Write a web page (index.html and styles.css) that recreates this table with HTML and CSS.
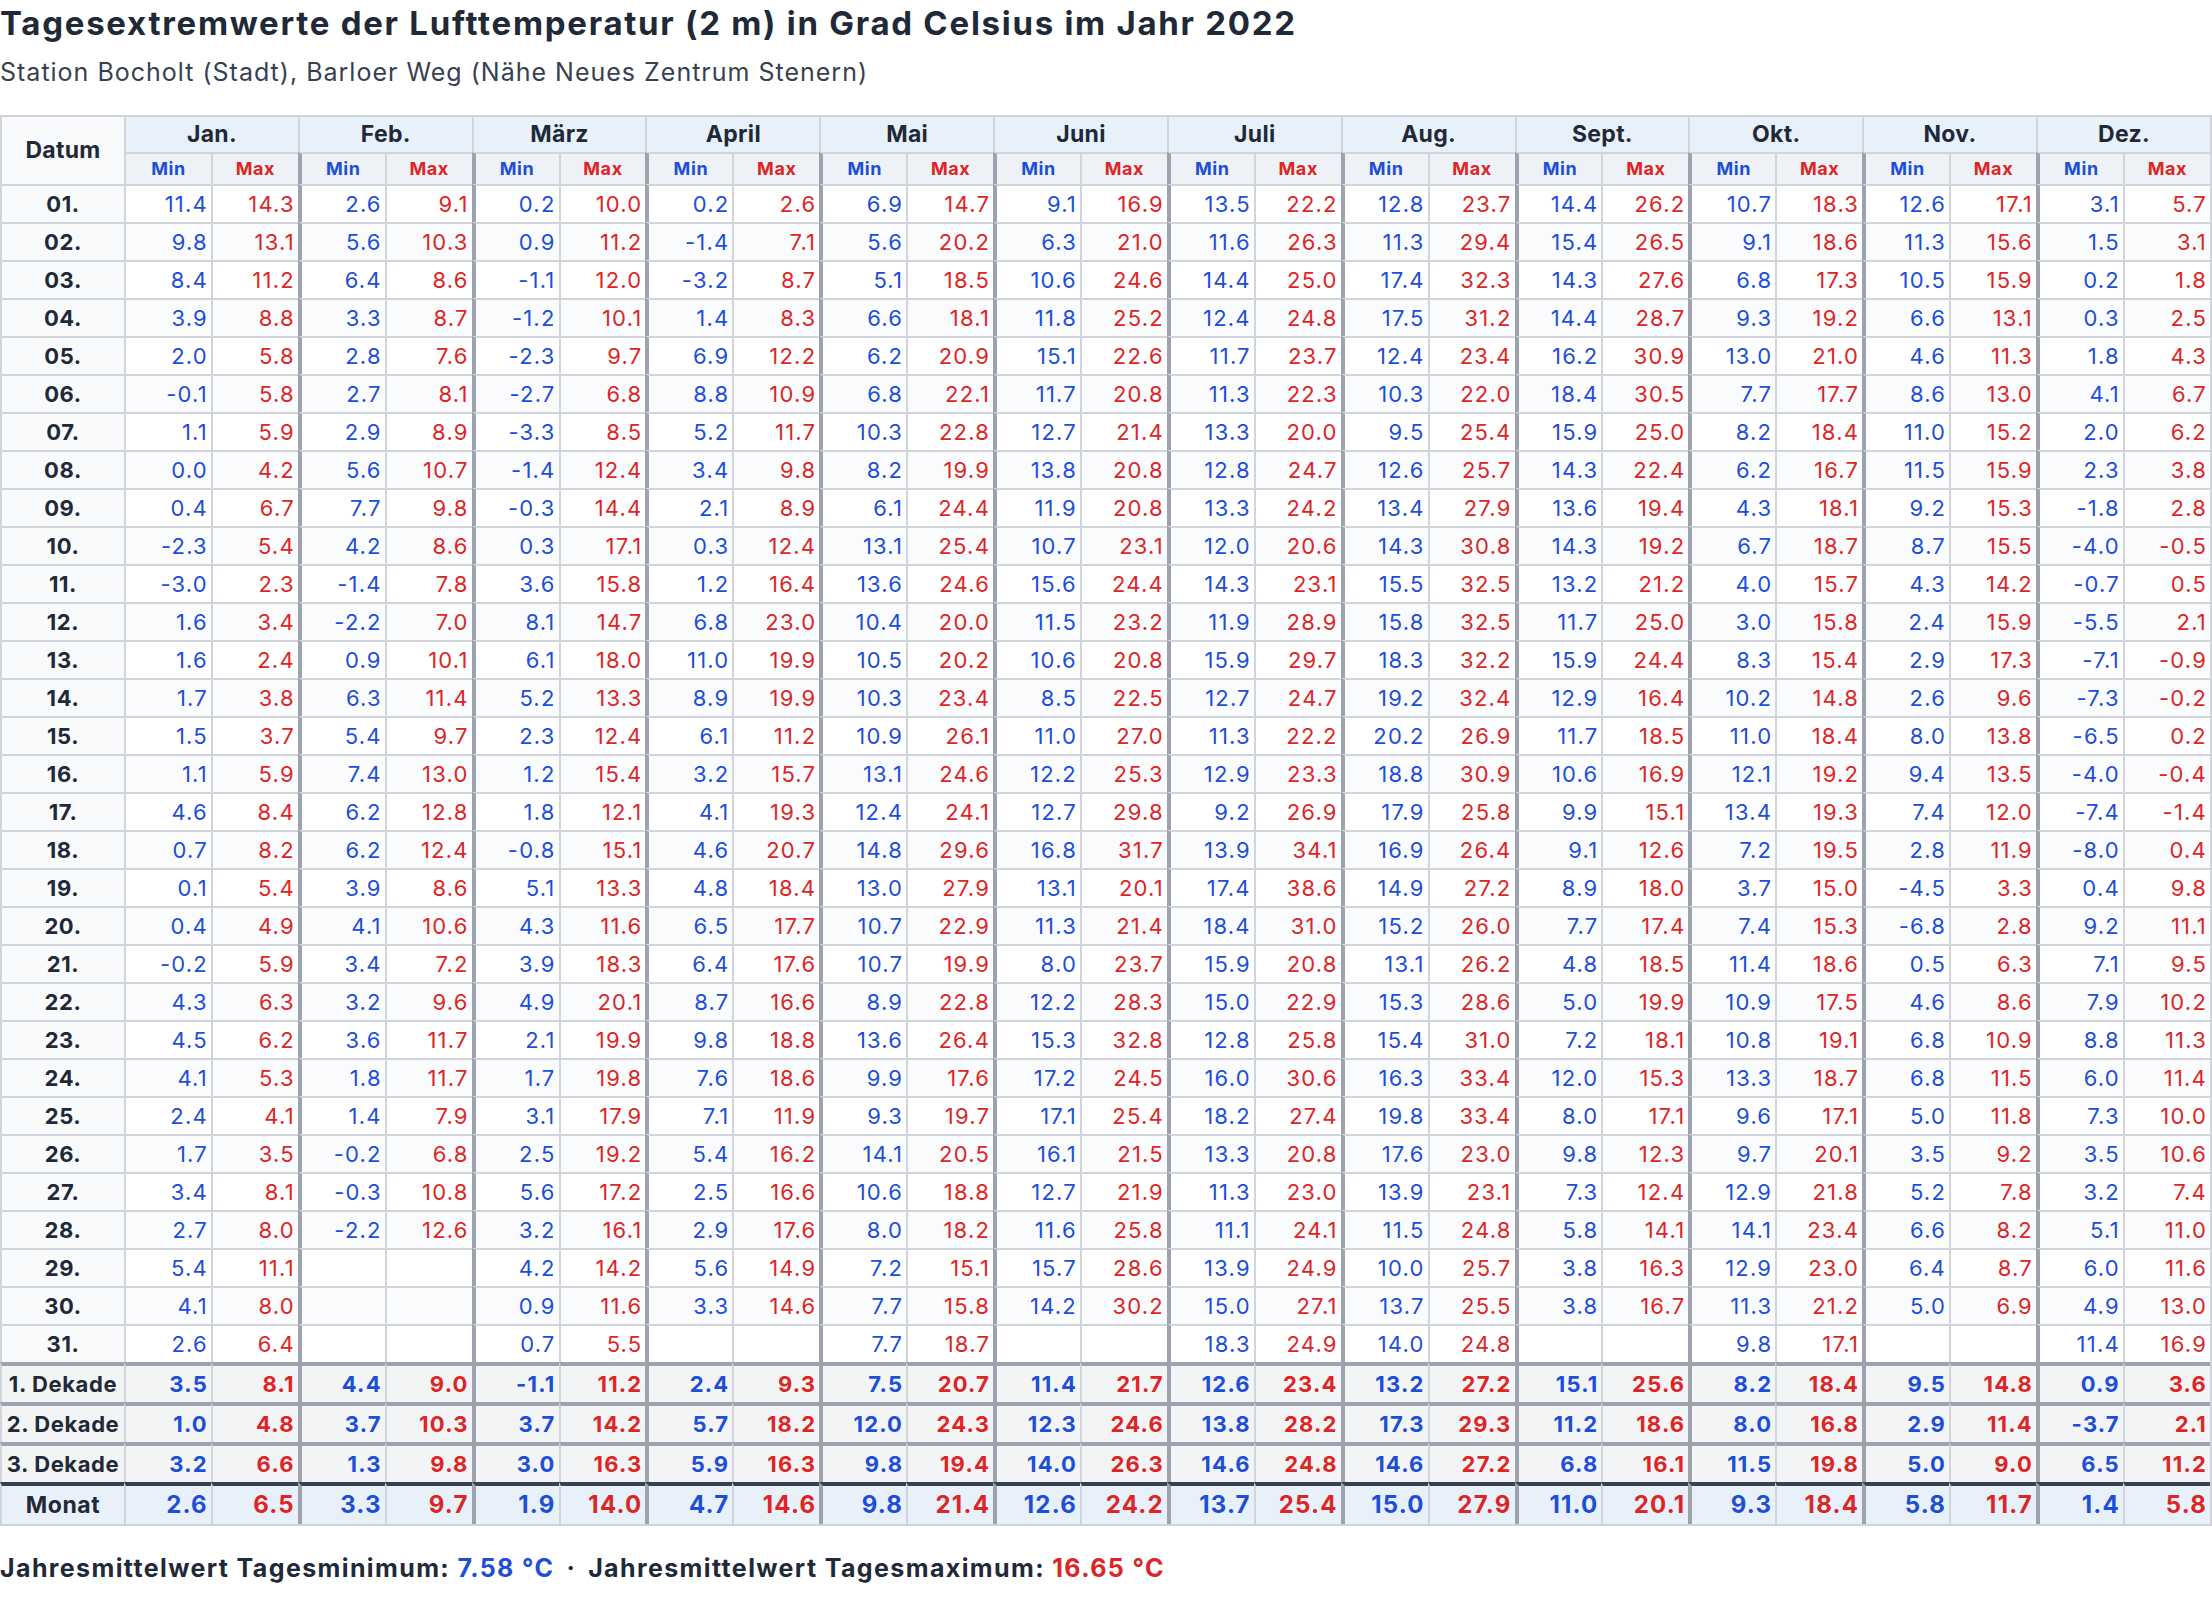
FILE: index.html
```html
<!DOCTYPE html>
<html lang="de">
<head>
<meta charset="utf-8">
<title>Tagesextremwerte der Lufttemperatur 2022</title>
<link rel="stylesheet" href="styles.css">
</head>
<body>
<h1 class="title">Tagesextremwerte der Lufttemperatur (2 m) in Grad Celsius im Jahr 2022</h1>
<p class="sub">Station Bocholt (Stadt), Barloer Weg (Nähe Neues Zentrum Stenern)</p>
<table class="temps">
<colgroup><col class="c-day"></colgroup>
<thead>
<tr class="months">
<th class="datum" rowspan="2">Datum</th>
<th colspan="2">Jan.</th><th colspan="2">Feb.</th><th colspan="2">März</th><th colspan="2">April</th><th colspan="2">Mai</th><th colspan="2">Juni</th><th colspan="2">Juli</th><th colspan="2">Aug.</th><th colspan="2">Sept.</th><th colspan="2">Okt.</th><th colspan="2">Nov.</th><th colspan="2">Dez.</th>
</tr>
<tr class="mm">
<th class="mn first">Min</th><th class="mx">Max</th><th class="mn">Min</th><th class="mx">Max</th><th class="mn">Min</th><th class="mx">Max</th><th class="mn">Min</th><th class="mx">Max</th><th class="mn">Min</th><th class="mx">Max</th><th class="mn">Min</th><th class="mx">Max</th><th class="mn">Min</th><th class="mx">Max</th><th class="mn">Min</th><th class="mx">Max</th><th class="mn">Min</th><th class="mx">Max</th><th class="mn">Min</th><th class="mx">Max</th><th class="mn">Min</th><th class="mx">Max</th><th class="mn">Min</th><th class="mx">Max</th>
</tr>
</thead>
<tbody class="days">
<tr><th>01.</th><td>11.4</td><td>14.3</td><td>2.6</td><td>9.1</td><td>0.2</td><td>10.0</td><td>0.2</td><td>2.6</td><td>6.9</td><td>14.7</td><td>9.1</td><td>16.9</td><td>13.5</td><td>22.2</td><td>12.8</td><td>23.7</td><td>14.4</td><td>26.2</td><td>10.7</td><td>18.3</td><td>12.6</td><td>17.1</td><td>3.1</td><td>5.7</td></tr>
<tr><th>02.</th><td>9.8</td><td>13.1</td><td>5.6</td><td>10.3</td><td>0.9</td><td>11.2</td><td>-1.4</td><td>7.1</td><td>5.6</td><td>20.2</td><td>6.3</td><td>21.0</td><td>11.6</td><td>26.3</td><td>11.3</td><td>29.4</td><td>15.4</td><td>26.5</td><td>9.1</td><td>18.6</td><td>11.3</td><td>15.6</td><td>1.5</td><td>3.1</td></tr>
<tr><th>03.</th><td>8.4</td><td>11.2</td><td>6.4</td><td>8.6</td><td>-1.1</td><td>12.0</td><td>-3.2</td><td>8.7</td><td>5.1</td><td>18.5</td><td>10.6</td><td>24.6</td><td>14.4</td><td>25.0</td><td>17.4</td><td>32.3</td><td>14.3</td><td>27.6</td><td>6.8</td><td>17.3</td><td>10.5</td><td>15.9</td><td>0.2</td><td>1.8</td></tr>
<tr><th>04.</th><td>3.9</td><td>8.8</td><td>3.3</td><td>8.7</td><td>-1.2</td><td>10.1</td><td>1.4</td><td>8.3</td><td>6.6</td><td>18.1</td><td>11.8</td><td>25.2</td><td>12.4</td><td>24.8</td><td>17.5</td><td>31.2</td><td>14.4</td><td>28.7</td><td>9.3</td><td>19.2</td><td>6.6</td><td>13.1</td><td>0.3</td><td>2.5</td></tr>
<tr><th>05.</th><td>2.0</td><td>5.8</td><td>2.8</td><td>7.6</td><td>-2.3</td><td>9.7</td><td>6.9</td><td>12.2</td><td>6.2</td><td>20.9</td><td>15.1</td><td>22.6</td><td>11.7</td><td>23.7</td><td>12.4</td><td>23.4</td><td>16.2</td><td>30.9</td><td>13.0</td><td>21.0</td><td>4.6</td><td>11.3</td><td>1.8</td><td>4.3</td></tr>
<tr><th>06.</th><td>-0.1</td><td>5.8</td><td>2.7</td><td>8.1</td><td>-2.7</td><td>6.8</td><td>8.8</td><td>10.9</td><td>6.8</td><td>22.1</td><td>11.7</td><td>20.8</td><td>11.3</td><td>22.3</td><td>10.3</td><td>22.0</td><td>18.4</td><td>30.5</td><td>7.7</td><td>17.7</td><td>8.6</td><td>13.0</td><td>4.1</td><td>6.7</td></tr>
<tr><th>07.</th><td>1.1</td><td>5.9</td><td>2.9</td><td>8.9</td><td>-3.3</td><td>8.5</td><td>5.2</td><td>11.7</td><td>10.3</td><td>22.8</td><td>12.7</td><td>21.4</td><td>13.3</td><td>20.0</td><td>9.5</td><td>25.4</td><td>15.9</td><td>25.0</td><td>8.2</td><td>18.4</td><td>11.0</td><td>15.2</td><td>2.0</td><td>6.2</td></tr>
<tr><th>08.</th><td>0.0</td><td>4.2</td><td>5.6</td><td>10.7</td><td>-1.4</td><td>12.4</td><td>3.4</td><td>9.8</td><td>8.2</td><td>19.9</td><td>13.8</td><td>20.8</td><td>12.8</td><td>24.7</td><td>12.6</td><td>25.7</td><td>14.3</td><td>22.4</td><td>6.2</td><td>16.7</td><td>11.5</td><td>15.9</td><td>2.3</td><td>3.8</td></tr>
<tr><th>09.</th><td>0.4</td><td>6.7</td><td>7.7</td><td>9.8</td><td>-0.3</td><td>14.4</td><td>2.1</td><td>8.9</td><td>6.1</td><td>24.4</td><td>11.9</td><td>20.8</td><td>13.3</td><td>24.2</td><td>13.4</td><td>27.9</td><td>13.6</td><td>19.4</td><td>4.3</td><td>18.1</td><td>9.2</td><td>15.3</td><td>-1.8</td><td>2.8</td></tr>
<tr><th>10.</th><td>-2.3</td><td>5.4</td><td>4.2</td><td>8.6</td><td>0.3</td><td>17.1</td><td>0.3</td><td>12.4</td><td>13.1</td><td>25.4</td><td>10.7</td><td>23.1</td><td>12.0</td><td>20.6</td><td>14.3</td><td>30.8</td><td>14.3</td><td>19.2</td><td>6.7</td><td>18.7</td><td>8.7</td><td>15.5</td><td>-4.0</td><td>-0.5</td></tr>
<tr><th>11.</th><td>-3.0</td><td>2.3</td><td>-1.4</td><td>7.8</td><td>3.6</td><td>15.8</td><td>1.2</td><td>16.4</td><td>13.6</td><td>24.6</td><td>15.6</td><td>24.4</td><td>14.3</td><td>23.1</td><td>15.5</td><td>32.5</td><td>13.2</td><td>21.2</td><td>4.0</td><td>15.7</td><td>4.3</td><td>14.2</td><td>-0.7</td><td>0.5</td></tr>
<tr><th>12.</th><td>1.6</td><td>3.4</td><td>-2.2</td><td>7.0</td><td>8.1</td><td>14.7</td><td>6.8</td><td>23.0</td><td>10.4</td><td>20.0</td><td>11.5</td><td>23.2</td><td>11.9</td><td>28.9</td><td>15.8</td><td>32.5</td><td>11.7</td><td>25.0</td><td>3.0</td><td>15.8</td><td>2.4</td><td>15.9</td><td>-5.5</td><td>2.1</td></tr>
<tr><th>13.</th><td>1.6</td><td>2.4</td><td>0.9</td><td>10.1</td><td>6.1</td><td>18.0</td><td>11.0</td><td>19.9</td><td>10.5</td><td>20.2</td><td>10.6</td><td>20.8</td><td>15.9</td><td>29.7</td><td>18.3</td><td>32.2</td><td>15.9</td><td>24.4</td><td>8.3</td><td>15.4</td><td>2.9</td><td>17.3</td><td>-7.1</td><td>-0.9</td></tr>
<tr><th>14.</th><td>1.7</td><td>3.8</td><td>6.3</td><td>11.4</td><td>5.2</td><td>13.3</td><td>8.9</td><td>19.9</td><td>10.3</td><td>23.4</td><td>8.5</td><td>22.5</td><td>12.7</td><td>24.7</td><td>19.2</td><td>32.4</td><td>12.9</td><td>16.4</td><td>10.2</td><td>14.8</td><td>2.6</td><td>9.6</td><td>-7.3</td><td>-0.2</td></tr>
<tr><th>15.</th><td>1.5</td><td>3.7</td><td>5.4</td><td>9.7</td><td>2.3</td><td>12.4</td><td>6.1</td><td>11.2</td><td>10.9</td><td>26.1</td><td>11.0</td><td>27.0</td><td>11.3</td><td>22.2</td><td>20.2</td><td>26.9</td><td>11.7</td><td>18.5</td><td>11.0</td><td>18.4</td><td>8.0</td><td>13.8</td><td>-6.5</td><td>0.2</td></tr>
<tr><th>16.</th><td>1.1</td><td>5.9</td><td>7.4</td><td>13.0</td><td>1.2</td><td>15.4</td><td>3.2</td><td>15.7</td><td>13.1</td><td>24.6</td><td>12.2</td><td>25.3</td><td>12.9</td><td>23.3</td><td>18.8</td><td>30.9</td><td>10.6</td><td>16.9</td><td>12.1</td><td>19.2</td><td>9.4</td><td>13.5</td><td>-4.0</td><td>-0.4</td></tr>
<tr><th>17.</th><td>4.6</td><td>8.4</td><td>6.2</td><td>12.8</td><td>1.8</td><td>12.1</td><td>4.1</td><td>19.3</td><td>12.4</td><td>24.1</td><td>12.7</td><td>29.8</td><td>9.2</td><td>26.9</td><td>17.9</td><td>25.8</td><td>9.9</td><td>15.1</td><td>13.4</td><td>19.3</td><td>7.4</td><td>12.0</td><td>-7.4</td><td>-1.4</td></tr>
<tr><th>18.</th><td>0.7</td><td>8.2</td><td>6.2</td><td>12.4</td><td>-0.8</td><td>15.1</td><td>4.6</td><td>20.7</td><td>14.8</td><td>29.6</td><td>16.8</td><td>31.7</td><td>13.9</td><td>34.1</td><td>16.9</td><td>26.4</td><td>9.1</td><td>12.6</td><td>7.2</td><td>19.5</td><td>2.8</td><td>11.9</td><td>-8.0</td><td>0.4</td></tr>
<tr><th>19.</th><td>0.1</td><td>5.4</td><td>3.9</td><td>8.6</td><td>5.1</td><td>13.3</td><td>4.8</td><td>18.4</td><td>13.0</td><td>27.9</td><td>13.1</td><td>20.1</td><td>17.4</td><td>38.6</td><td>14.9</td><td>27.2</td><td>8.9</td><td>18.0</td><td>3.7</td><td>15.0</td><td>-4.5</td><td>3.3</td><td>0.4</td><td>9.8</td></tr>
<tr><th>20.</th><td>0.4</td><td>4.9</td><td>4.1</td><td>10.6</td><td>4.3</td><td>11.6</td><td>6.5</td><td>17.7</td><td>10.7</td><td>22.9</td><td>11.3</td><td>21.4</td><td>18.4</td><td>31.0</td><td>15.2</td><td>26.0</td><td>7.7</td><td>17.4</td><td>7.4</td><td>15.3</td><td>-6.8</td><td>2.8</td><td>9.2</td><td>11.1</td></tr>
<tr><th>21.</th><td>-0.2</td><td>5.9</td><td>3.4</td><td>7.2</td><td>3.9</td><td>18.3</td><td>6.4</td><td>17.6</td><td>10.7</td><td>19.9</td><td>8.0</td><td>23.7</td><td>15.9</td><td>20.8</td><td>13.1</td><td>26.2</td><td>4.8</td><td>18.5</td><td>11.4</td><td>18.6</td><td>0.5</td><td>6.3</td><td>7.1</td><td>9.5</td></tr>
<tr><th>22.</th><td>4.3</td><td>6.3</td><td>3.2</td><td>9.6</td><td>4.9</td><td>20.1</td><td>8.7</td><td>16.6</td><td>8.9</td><td>22.8</td><td>12.2</td><td>28.3</td><td>15.0</td><td>22.9</td><td>15.3</td><td>28.6</td><td>5.0</td><td>19.9</td><td>10.9</td><td>17.5</td><td>4.6</td><td>8.6</td><td>7.9</td><td>10.2</td></tr>
<tr><th>23.</th><td>4.5</td><td>6.2</td><td>3.6</td><td>11.7</td><td>2.1</td><td>19.9</td><td>9.8</td><td>18.8</td><td>13.6</td><td>26.4</td><td>15.3</td><td>32.8</td><td>12.8</td><td>25.8</td><td>15.4</td><td>31.0</td><td>7.2</td><td>18.1</td><td>10.8</td><td>19.1</td><td>6.8</td><td>10.9</td><td>8.8</td><td>11.3</td></tr>
<tr><th>24.</th><td>4.1</td><td>5.3</td><td>1.8</td><td>11.7</td><td>1.7</td><td>19.8</td><td>7.6</td><td>18.6</td><td>9.9</td><td>17.6</td><td>17.2</td><td>24.5</td><td>16.0</td><td>30.6</td><td>16.3</td><td>33.4</td><td>12.0</td><td>15.3</td><td>13.3</td><td>18.7</td><td>6.8</td><td>11.5</td><td>6.0</td><td>11.4</td></tr>
<tr><th>25.</th><td>2.4</td><td>4.1</td><td>1.4</td><td>7.9</td><td>3.1</td><td>17.9</td><td>7.1</td><td>11.9</td><td>9.3</td><td>19.7</td><td>17.1</td><td>25.4</td><td>18.2</td><td>27.4</td><td>19.8</td><td>33.4</td><td>8.0</td><td>17.1</td><td>9.6</td><td>17.1</td><td>5.0</td><td>11.8</td><td>7.3</td><td>10.0</td></tr>
<tr><th>26.</th><td>1.7</td><td>3.5</td><td>-0.2</td><td>6.8</td><td>2.5</td><td>19.2</td><td>5.4</td><td>16.2</td><td>14.1</td><td>20.5</td><td>16.1</td><td>21.5</td><td>13.3</td><td>20.8</td><td>17.6</td><td>23.0</td><td>9.8</td><td>12.3</td><td>9.7</td><td>20.1</td><td>3.5</td><td>9.2</td><td>3.5</td><td>10.6</td></tr>
<tr><th>27.</th><td>3.4</td><td>8.1</td><td>-0.3</td><td>10.8</td><td>5.6</td><td>17.2</td><td>2.5</td><td>16.6</td><td>10.6</td><td>18.8</td><td>12.7</td><td>21.9</td><td>11.3</td><td>23.0</td><td>13.9</td><td>23.1</td><td>7.3</td><td>12.4</td><td>12.9</td><td>21.8</td><td>5.2</td><td>7.8</td><td>3.2</td><td>7.4</td></tr>
<tr><th>28.</th><td>2.7</td><td>8.0</td><td>-2.2</td><td>12.6</td><td>3.2</td><td>16.1</td><td>2.9</td><td>17.6</td><td>8.0</td><td>18.2</td><td>11.6</td><td>25.8</td><td>11.1</td><td>24.1</td><td>11.5</td><td>24.8</td><td>5.8</td><td>14.1</td><td>14.1</td><td>23.4</td><td>6.6</td><td>8.2</td><td>5.1</td><td>11.0</td></tr>
<tr><th>29.</th><td>5.4</td><td>11.1</td><td></td><td></td><td>4.2</td><td>14.2</td><td>5.6</td><td>14.9</td><td>7.2</td><td>15.1</td><td>15.7</td><td>28.6</td><td>13.9</td><td>24.9</td><td>10.0</td><td>25.7</td><td>3.8</td><td>16.3</td><td>12.9</td><td>23.0</td><td>6.4</td><td>8.7</td><td>6.0</td><td>11.6</td></tr>
<tr><th>30.</th><td>4.1</td><td>8.0</td><td></td><td></td><td>0.9</td><td>11.6</td><td>3.3</td><td>14.6</td><td>7.7</td><td>15.8</td><td>14.2</td><td>30.2</td><td>15.0</td><td>27.1</td><td>13.7</td><td>25.5</td><td>3.8</td><td>16.7</td><td>11.3</td><td>21.2</td><td>5.0</td><td>6.9</td><td>4.9</td><td>13.0</td></tr>
<tr><th>31.</th><td>2.6</td><td>6.4</td><td></td><td></td><td>0.7</td><td>5.5</td><td></td><td></td><td>7.7</td><td>18.7</td><td></td><td></td><td>18.3</td><td>24.9</td><td>14.0</td><td>24.8</td><td></td><td></td><td>9.8</td><td>17.1</td><td></td><td></td><td>11.4</td><td>16.9</td></tr>
</tbody>
<tbody class="sums">
<tr class="dek"><th>1. Dekade</th><td>3.5</td><td>8.1</td><td>4.4</td><td>9.0</td><td>-1.1</td><td>11.2</td><td>2.4</td><td>9.3</td><td>7.5</td><td>20.7</td><td>11.4</td><td>21.7</td><td>12.6</td><td>23.4</td><td>13.2</td><td>27.2</td><td>15.1</td><td>25.6</td><td>8.2</td><td>18.4</td><td>9.5</td><td>14.8</td><td>0.9</td><td>3.6</td></tr>
<tr class="dek"><th>2. Dekade</th><td>1.0</td><td>4.8</td><td>3.7</td><td>10.3</td><td>3.7</td><td>14.2</td><td>5.7</td><td>18.2</td><td>12.0</td><td>24.3</td><td>12.3</td><td>24.6</td><td>13.8</td><td>28.2</td><td>17.3</td><td>29.3</td><td>11.2</td><td>18.6</td><td>8.0</td><td>16.8</td><td>2.9</td><td>11.4</td><td>-3.7</td><td>2.1</td></tr>
<tr class="dek"><th>3. Dekade</th><td>3.2</td><td>6.6</td><td>1.3</td><td>9.8</td><td>3.0</td><td>16.3</td><td>5.9</td><td>16.3</td><td>9.8</td><td>19.4</td><td>14.0</td><td>26.3</td><td>14.6</td><td>24.8</td><td>14.6</td><td>27.2</td><td>6.8</td><td>16.1</td><td>11.5</td><td>19.8</td><td>5.0</td><td>9.0</td><td>6.5</td><td>11.2</td></tr>
<tr class="monat"><th>Monat</th><td>2.6</td><td>6.5</td><td>3.3</td><td>9.7</td><td>1.9</td><td>14.0</td><td>4.7</td><td>14.6</td><td>9.8</td><td>21.4</td><td>12.6</td><td>24.2</td><td>13.7</td><td>25.4</td><td>15.0</td><td>27.9</td><td>11.0</td><td>20.1</td><td>9.3</td><td>18.4</td><td>5.8</td><td>11.7</td><td>1.4</td><td>5.8</td></tr>
</tbody>
</table>
<p class="foot">Jahresmittelwert Tagesminimum: <span class="v-min">7.58 °C</span><span class="sep">·</span>Jahresmittelwert Tagesmaximum: <span class="v-max">16.65 °C</span></p>
</body>
</html>
```
FILE: styles.css
```css
html, body {
  margin: 0;
  padding: 0;
  background: #ffffff;
}
body {
  font-family: Inter, "Noto Sans", "Liberation Sans", sans-serif;
  color: #1f2937;
}
.title {
  margin: 0;
  font-size: 33px;
  line-height: 46px;
  font-weight: 700;
  letter-spacing: 1.72px;
  color: #1f2937;
}
.sub {
  margin: 6px 0 0;
  font-size: 25px;
  line-height: 40px;
  font-weight: 400;
  letter-spacing: 1px;
  color: #374151;
}
.temps {
  margin-top: 23px;
  width: 2212px;
  table-layout: fixed;
  border-collapse: separate;
  border-spacing: 0;
  border-right: 2px solid #d1d5db;
  border-bottom: 2px solid #d1d5db;
}
.c-day {
  width: 124px;
}
.temps th,
.temps td {
  border-top: 2px solid #d1d5db;
  border-left: 2px solid #d1d5db;
  padding: 0 4px;
  white-space: nowrap;
}
/* header */
.months th {
  background: #e8f0fa;
  font-size: 23px;
  line-height: 35px;
  font-weight: 700;
  text-align: center;
  letter-spacing: 0.3px;
}
.months th.datum {
  background: #f8fafc;
}
.mm th {
  background: #eef2f6;
  font-size: 18px;
  line-height: 30px;
  font-weight: 700;
  text-align: center;
  letter-spacing: 0.6px;
}
.mm th.mn {
  color: #1d4ed8;
  border-left: 4px solid #9ca3af;
}
.mm th.mn.first {
  border-left: 2px solid #d1d5db;
}
.mm th.mx {
  color: #dc2626;
}
/* body */
.temps tbody th {
  background: #f8fafc;
  font-size: 22px;
  line-height: 36px;
  font-weight: 700;
  text-align: center;
  padding: 0;
  letter-spacing: 0.6px;
}
.temps tbody td {
  font-size: 22px;
  line-height: 36px;
  text-align: right;
  padding: 0 3px 0 0;
  letter-spacing: 1.2px;
  background: #ffffff;
  color: #dc2626;
}
.days tr:nth-child(even) td {
  background: #fafbfd;
}
.temps tbody td:nth-child(even) {
  color: #1d4ed8;
  border-left: 4px solid #9ca3af;
}
.temps tbody td:nth-child(2) {
  border-left: 2px solid #d1d5db;
}
/* sums */
.sums th,
.sums td {
  font-weight: 700;
}
.sums th {
  letter-spacing: 1.4px;
}
.sums tr.dek th,
.sums tr.dek td {
  background: #f3f4f6;
  border-top: 4px solid #9ca3af;
}
.sums tr.monat th,
.sums tr.monat td {
  background: #e8f0fa;
  border-top: 4px solid #374151;
  line-height: 38px;
}
.sums tr.monat td {
  font-size: 24px;
}
.sums tr.monat th {
  font-size: 23px;
  letter-spacing: 0.6px;
}
/* footer */
.foot {
  margin: 22px 0 0;
  font-size: 25px;
  line-height: 40px;
  font-weight: 700;
  letter-spacing: 1.38px;
  color: #1f2937;
}
.v-min {
  color: #1d4ed8;
}
.v-max {
  color: #dc2626;
}
.sep {
  display: inline-block;
  padding: 0 12px;
  color: #1f2937;
}
```
